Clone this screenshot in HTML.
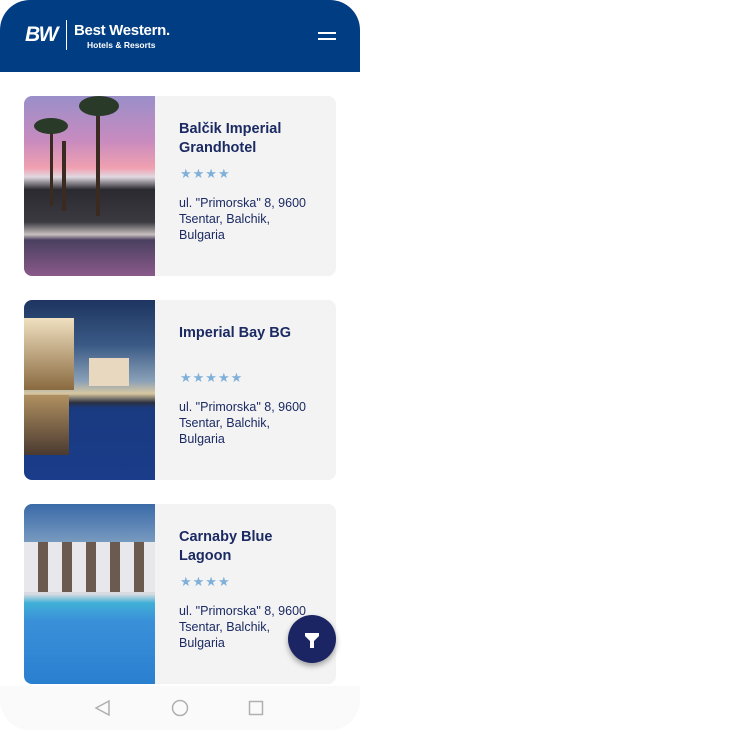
<!DOCTYPE html>
<html><head><meta charset="utf-8"><style>
*{margin:0;padding:0;box-sizing:border-box}
body{width:730px;height:730px;background:#fff;font-family:"Liberation Sans",sans-serif;position:relative;overflow:hidden}
.phone{position:absolute;left:0;top:0;width:360px;height:730px;background:#fff;border-radius:30px 30px 30px 30px;overflow:hidden}
.hdr{position:absolute;left:0;top:0;width:360px;height:72px;background:#003d82}
.card{position:absolute;left:24px;width:312px;height:180px;background:#f3f3f3;border-radius:8px;overflow:hidden}
.img{position:absolute;left:0;top:0;width:131px;height:180px;overflow:hidden}
.img div{position:absolute}
.t{position:absolute;left:155px;top:24px;width:130px;font-weight:bold;font-size:14.5px;line-height:19px;color:#1b2a63}
.s{position:absolute;left:156px;color:#7fb0d9;font-size:13px;letter-spacing:1px}
.a{position:absolute;left:155px;font-size:12.5px;line-height:16px;color:#1b2a63;width:134px}
.nav{position:absolute;left:0;top:686px;width:360px;height:44px;background:#fafafa}
.fab{position:absolute;left:288px;top:615px;width:48px;height:48px;border-radius:50%;background:#1b2563;box-shadow:0 3px 6px rgba(0,0,0,.35)}
</style></head><body>
<div class="phone">
<div class="hdr">
<div style="position:absolute;left:25px;top:23px;color:#fff;font-style:italic;font-weight:bold;font-size:21px;letter-spacing:-1.5px">BW</div>
<div style="position:absolute;left:66px;top:20px;width:1px;height:30px;background:#fff"></div>
<div style="position:absolute;left:74px;top:22px;color:#fff;font-weight:bold;font-size:15px;letter-spacing:-.3px">Best Western.</div>
<div style="position:absolute;left:87px;top:40px;color:#fff;font-weight:bold;font-size:8.5px">Hotels &amp; Resorts</div>
<div style="position:absolute;left:318px;top:32px;width:18px;height:1.5px;background:#fff"></div>
<div style="position:absolute;left:318px;top:38px;width:18px;height:1.5px;background:#fff"></div>
</div>

<div class="card" style="top:96px">
<div class="img" style="background:linear-gradient(#9a8fc9 0%,#c88bbf 25%,#f0a0b0 40%,#e0d8e0 45%,#2a2a30 52%,#3a3a40 70%,#c8c0c0 77%,#4a4060 80%,#8a5a8a 100%)">
<div style="left:72px;top:10px;width:4px;height:110px;background:#3a2a20"></div>
<div style="left:55px;top:0;width:40px;height:20px;border-radius:50%;background:#2a3a28"></div>
<div style="left:26px;top:30px;width:3px;height:80px;background:#3a2a20"></div>
<div style="left:10px;top:22px;width:34px;height:16px;border-radius:50%;background:#2a3a28"></div>
<div style="left:38px;top:45px;width:4px;height:70px;background:#3a2a20"></div>
</div>
<div class="t">Balčik Imperial Grandhotel</div>
<div class="s" style="top:70px">★★★★</div>
<div class="a" style="top:99px">ul. "Primorska" 8, 9600 Tsentar, Balchik, Bulgaria</div>
</div>

<div class="card" style="top:300px">
<div class="img" style="background:linear-gradient(#1d3560 0%,#3a5a85 25%,#8aa0b8 45%,#d8c8a0 52%,#2a3040 57%,#1a3a80 60%,#1a3c8a 100%)">
<div style="left:0;top:18px;width:50px;height:72px;background:linear-gradient(#f0e0c0,#8a6a40)"></div>
<div style="left:0;top:95px;width:45px;height:60px;background:linear-gradient(#b09060,#4a3a30)"></div>
<div style="left:65px;top:58px;width:40px;height:28px;background:#e8d8c0"></div>
</div>
<div class="t">Imperial Bay BG</div>
<div class="s" style="top:70px">★★★★★</div>
<div class="a" style="top:99px">ul. "Primorska" 8, 9600 Tsentar, Balchik, Bulgaria</div>
</div>

<div class="card" style="top:504px">
<div class="img" style="background:linear-gradient(#3a6aa8 0%,#7a9cc0 22%,#e8ecf0 26%,#d8dce0 50%,#40b0d8 55%,#3a90d8 65%,#2a80d0 100%)">
<div style="left:0;top:38px;width:131px;height:50px;background:repeating-linear-gradient(90deg,#e8e8ec 0 14px,#6a5a50 14px 24px)"></div>
</div>
<div class="t">Carnaby Blue Lagoon</div>
<div class="s" style="top:70px">★★★★</div>
<div class="a" style="top:99px">ul. "Primorska" 8, 9600 Tsentar, Balchik, Bulgaria</div>
</div>

<div class="fab"><svg width="48" height="48" viewBox="0 0 48 48"><path d="M17 18h14v3l-5 5v7h-4v-7l-5-5z" fill="#fff"/></svg></div>

<div class="nav"><svg width="360" height="44"><path d="M109 15l-13 7 13 7z" fill="none" stroke="#b0b0b0" stroke-width="1.5"/><circle cx="180" cy="22" r="7.5" fill="none" stroke="#b0b0b0" stroke-width="1.5"/><rect x="249.5" y="15.5" width="13" height="13" fill="none" stroke="#b0b0b0" stroke-width="1.5"/></svg></div>
</div>
</body></html>
